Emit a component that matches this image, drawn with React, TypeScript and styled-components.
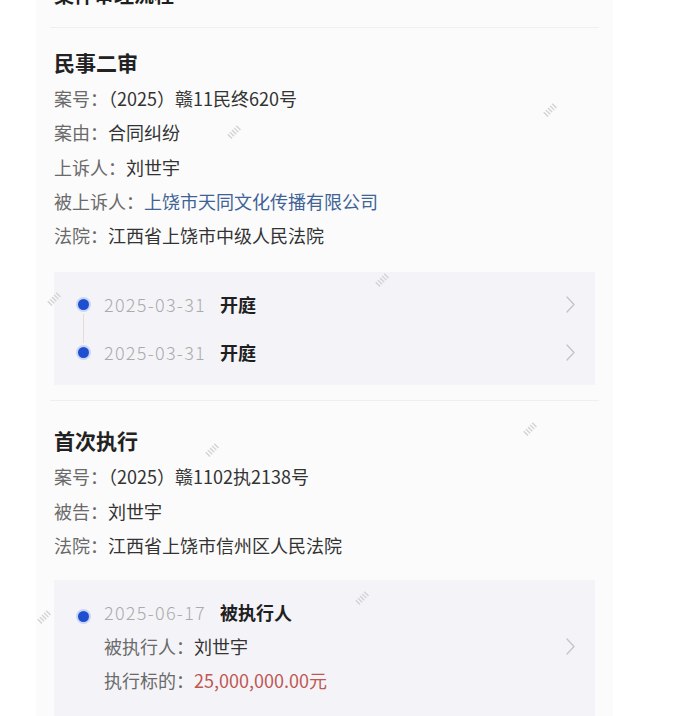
import React from "react";
import styled, { createGlobalStyle } from "styled-components";

const Global = createGlobalStyle`
  html, body { margin: 0; padding: 0; background: #ffffff; }
  body { font-family: "Noto Sans CJK SC", "Noto Sans", sans-serif; }
`;

const Page = styled.div`
  position: relative;
  width: 692px;
  height: 716px;
  overflow: hidden;
  background: #ffffff;
`;

const Card = styled.div`
  margin-left: 36px;
  width: 577px;
  height: 780px;
  background: #fbfbfb;
  padding: 0 18px;
  box-sizing: border-box;
  display: flex;
  flex-direction: column;
`;

const TopTitle = styled.div`
  margin-top: -19px;
  font-size: 20px;
  line-height: 28px;
  font-weight: 700;
  color: #1f1f1f;
`;

const Divider = styled.div<{ $mt: number }>`
  height: 1px;
  background: #efefef;
  margin: ${(p) => p.$mt}px -4px 0;
`;

const Section = styled.section<{ $top: number }>`
  padding-top: ${(p) => p.$top}px;
  display: flex;
  flex-direction: column;
`;

const SectionTitle = styled.h2`
  margin: 0 0 4px;
  font-size: 21px;
  line-height: 30px;
  font-weight: 700;
  color: #222;
`;

const InfoRow = styled.div`
  font-size: 18px;
  line-height: 34.3px;
  color: #333;
  white-space: nowrap;
`;

const Label = styled.span`
  color: #6a6a6a;
`;

const Value = styled.span<{ $tone?: "link" | "money" }>`
  color: ${(p) =>
    p.$tone === "link" ? "#3f6396" : p.$tone === "money" ? "#bf5752" : "#333"};
`;

const TimelineBox = styled.div<{ $mt: number; $pt: number; $pb: number }>`
  margin-top: ${(p) => p.$mt}px;
  background: #f4f4f8;
  padding: ${(p) => p.$pt}px 20px ${(p) => p.$pb}px 24px;
  display: flex;
  flex-direction: column;
`;

const Entry = styled.div<{ $h?: number }>`
  display: flex;
  align-items: center;
  min-height: ${(p) => p.$h ?? 48}px;
`;

const Rail = styled.div<{ $up?: boolean; $down?: boolean }>`
  width: 10px;
  align-self: stretch;
  display: flex;
  flex-direction: column;
  align-items: center;
  &::before,
  &::after {
    content: "";
    width: 1px;
    flex: 1;
    background: #e4ddd0;
  }
  &::before {
    visibility: ${(p) => (p.$up ? "visible" : "hidden")};
  }
  &::after {
    visibility: ${(p) => (p.$down ? "visible" : "hidden")};
  }
`;

const RailTop = styled.div`
  width: 10px;
  display: flex;
  justify-content: center;
  align-self: flex-start;
  padding-top: 12px;
`;

const Dot = styled.span`
  width: 11px;
  height: 11px;
  border-radius: 50%;
  background: #1d4fd0;
  box-shadow: 0 0 0 2px rgba(60, 110, 235, 0.22);
  flex: none;
  margin: 4px 0;
`;

const EntryBody = styled.div`
  flex: 1;
  margin-left: 16px;
  display: flex;
  flex-direction: column;
`;

const EntryLine = styled.div`
  font-size: 18px;
  line-height: 34px;
  color: #333;
  white-space: nowrap;
`;

const DateText = styled.span`
  color: #ababab;
  font-weight: 300;
  margin-right: 14px;
  letter-spacing: 1.3px;
`;

const Event = styled.span`
  color: #1f1f1f;
  font-weight: 700;
`;

const Chevron = () => (
  <svg width="9" height="17" viewBox="0 0 9 17" fill="none">
    <polyline points="1,1 8,8.5 1,16" stroke="#c4c4c4" strokeWidth="1.3" strokeLinejoin="round" strokeLinecap="round" />
  </svg>
);

const Mark = styled.div<{ $x: number; $y: number }>`
  position: absolute;
  left: ${(p) => p.$x}px;
  top: ${(p) => p.$y}px;
  width: 16px;
  height: 16px;
  transform: rotate(-45deg);
  pointer-events: none;
`;

const Watermark = ({ x, y }: { x: number; y: number }) => (
  <Mark $x={x} $y={y}>
    <svg width="16" height="16" viewBox="0 0 16 16">
      <g stroke="#d2d2d2" strokeWidth="1.4">
        <line x1="2" y1="5" x2="2" y2="11" />
        <line x1="5" y1="5" x2="5" y2="11" />
        <line x1="8" y1="5" x2="8" y2="11" />
        <line x1="11" y1="5" x2="11" y2="11" />
        <line x1="14" y1="5" x2="14" y2="11" />
      </g>
    </svg>
  </Mark>
);

const marks = [
  [540, 100],
  [224, 122],
  [372, 270],
  [44, 289],
  [202, 440],
  [520, 419],
  [352, 588],
  [34, 607],
];

export default function App() {
  return (
    <Page>
      <Global />
      <Card>
        <TopTitle>案件审理流程</TopTitle>
        <Divider $mt={18} />
        <Section $top={19}>
          <SectionTitle>民事二审</SectionTitle>
          <InfoRow>
            <Label>案号：</Label>
            <Value>（2025）赣11民终620号</Value>
          </InfoRow>
          <InfoRow>
            <Label>案由：</Label>
            <Value>合同纠纷</Value>
          </InfoRow>
          <InfoRow>
            <Label>上诉人：</Label>
            <Value>刘世宇</Value>
          </InfoRow>
          <InfoRow>
            <Label>被上诉人：</Label>
            <Value $tone="link">上饶市天同文化传播有限公司</Value>
          </InfoRow>
          <InfoRow>
            <Label>法院：</Label>
            <Value>江西省上饶市中级人民法院</Value>
          </InfoRow>
          <TimelineBox $mt={20} $pt={8} $pb={9}>
            <Entry>
              <Rail $down>
                <Dot />
              </Rail>
              <EntryBody>
                <EntryLine>
                  <DateText>2025-03-31</DateText>
                  <Event>开庭</Event>
                </EntryLine>
              </EntryBody>
              <Chevron />
            </Entry>
            <Entry>
              <Rail $up>
                <Dot />
              </Rail>
              <EntryBody>
                <EntryLine>
                  <DateText>2025-03-31</DateText>
                  <Event>开庭</Event>
                </EntryLine>
              </EntryBody>
              <Chevron />
            </Entry>
          </TimelineBox>
        </Section>
        <Divider $mt={15} />
        <Section $top={24}>
          <SectionTitle>首次执行</SectionTitle>
          <InfoRow>
            <Label>案号：</Label>
            <Value>（2025）赣1102执2138号</Value>
          </InfoRow>
          <InfoRow>
            <Label>被告：</Label>
            <Value>刘世宇</Value>
          </InfoRow>
          <InfoRow>
            <Label>法院：</Label>
            <Value>江西省上饶市信州区人民法院</Value>
          </InfoRow>
          <TimelineBox $mt={18} $pt={15} $pb={30}>
            <Entry>
              <RailTop>
                <Dot />
              </RailTop>
              <EntryBody>
                <EntryLine>
                  <DateText>2025-06-17</DateText>
                  <Event>被执行人</Event>
                </EntryLine>
                <EntryLine>
                  <Label>被执行人：</Label>
                  <Value>刘世宇</Value>
                </EntryLine>
                <EntryLine>
                  <Label>执行标的：</Label>
                  <Value $tone="money">25,000,000.00元</Value>
                </EntryLine>
              </EntryBody>
              <Chevron />
            </Entry>
          </TimelineBox>
        </Section>
      </Card>
      {marks.map(([x, y], i) => (
        <Watermark key={i} x={x} y={y} />
      ))}
    </Page>
  );
}
